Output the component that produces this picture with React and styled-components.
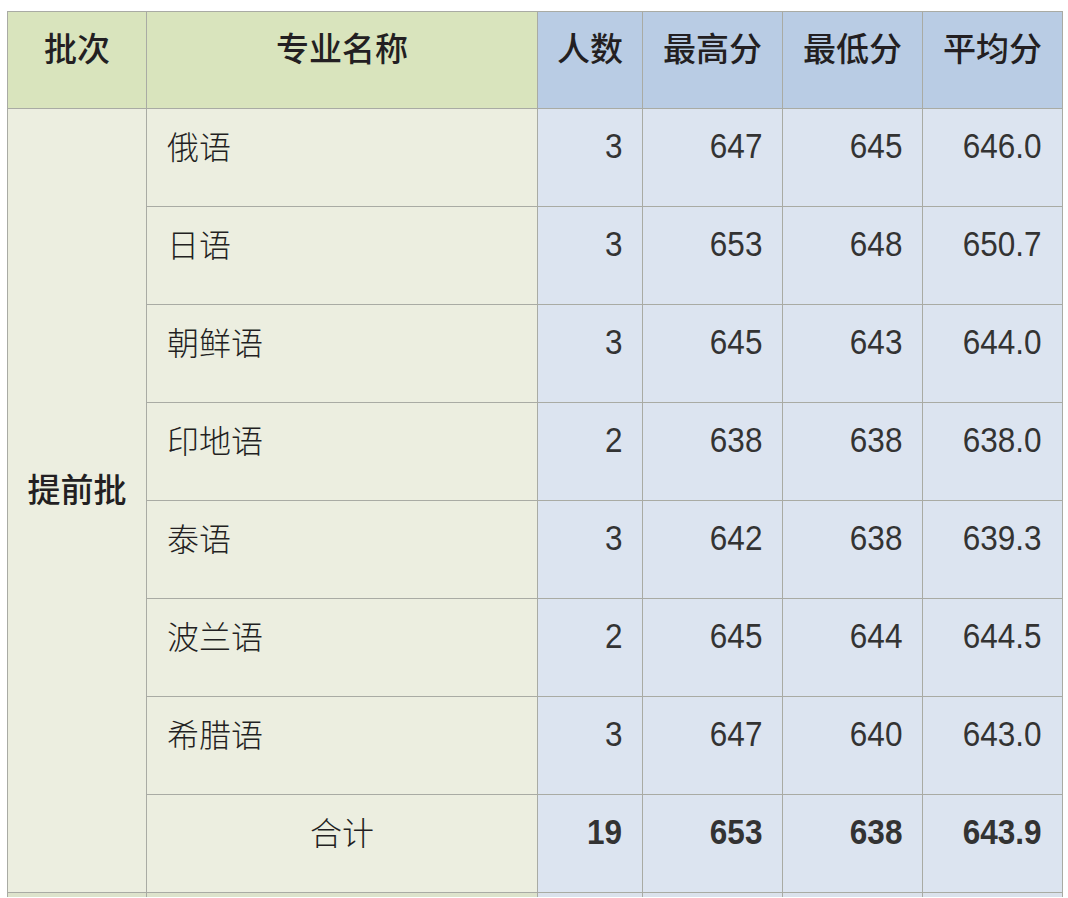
import React from 'react';
import styled, { createGlobalStyle } from 'styled-components';

const GlobalStyle = createGlobalStyle`
	html, body {
		margin: 0;
		padding: 0;
		background: #ffffff;
		overflow: hidden;
	}
`;

const Page = styled.div`
	padding: 11px 0 0 7px;
	width: 1068px;
	height: 898px;
	box-sizing: border-box;
`;

const Grid = styled.div`
	display: grid;
	grid-template-columns: 138px 390px 104px 139px 139px 139px;
	grid-template-rows: 96px repeat(8, 97px) 4px;
	gap: 1px;
	padding: 1px 1px 0 1px;
	width: max-content;
	background: #a9aba4;
	font-family: 'Noto Sans CJK SC', 'Noto Sans', sans-serif;
	color: #231f22;
`;

const Cell = styled.div`
	display: flex;
	align-items: flex-start;
	justify-content: ${props => props.align || 'flex-start'};
	box-sizing: border-box;
	background: ${props => (props.blue ? '#dce4f0' : '#eceee0')};
	padding: 20px 20px 0 20px;
	font-size: 32px;
	font-weight: 300;
	line-height: 1;
`;

const HeadCell = styled(Cell)`
	background: ${props => (props.blue ? '#b9cce4' : '#d9e4bd')};
	justify-content: center;
	padding: 19px 4px 0 4px;
	font-size: 33px;
	font-weight: 500;
`;

const BatchCell = styled(Cell)`
	grid-row: 2 / span 8;
	align-items: center;
	justify-content: center;
	padding: 0 0 24px 0;
	font-size: 33px;
	font-weight: 500;
`;

const EdgeCell = styled.div`
	background: ${props => (props.blue ? '#dbe2ec' : '#dde3cc')};
`;

const Num = styled.span`
	display: inline-block;
	font-family: 'Liberation Sans', Arial, sans-serif;
	font-size: 35px;
	font-weight: ${props => (props.bold ? 700 : 400)};
	color: #333333;
	transform: scaleX(0.9);
	transform-origin: right center;
	margin-top: -1px;
`;

const headers = ['人数', '最高分', '最低分', '平均分'];

const rows = [
	['俄语', '3', '647', '645', '646.0'],
	['日语', '3', '653', '648', '650.7'],
	['朝鲜语', '3', '645', '643', '644.0'],
	['印地语', '2', '638', '638', '638.0'],
	['泰语', '3', '642', '638', '639.3'],
	['波兰语', '2', '645', '644', '644.5'],
	['希腊语', '3', '647', '640', '643.0'],
];

const total = ['合计', '19', '653', '638', '643.9'];

const App = () => (
	<Page>
		<GlobalStyle />
		<Grid>
			<HeadCell>批次</HeadCell>
			<HeadCell>专业名称</HeadCell>
			{headers.map(h => (
				<HeadCell blue key={h}>{h}</HeadCell>
			))}

			<BatchCell>提前批</BatchCell>
			{rows.map(r => (
				<React.Fragment key={r[0]}>
					<Cell>{r[0]}</Cell>
					{r.slice(1).map((v, i) => (
						<Cell blue align="flex-end" key={i}>
							<Num>{v}</Num>
						</Cell>
					))}
				</React.Fragment>
			))}
			<Cell align="center">{total[0]}</Cell>
			{total.slice(1).map((v, i) => (
				<Cell blue align="flex-end" key={i}>
					<Num bold>{v}</Num>
				</Cell>
			))}

			<EdgeCell />
			<EdgeCell />
			<EdgeCell blue />
			<EdgeCell blue />
			<EdgeCell blue />
			<EdgeCell blue />
		</Grid>
	</Page>
);

export default App;
